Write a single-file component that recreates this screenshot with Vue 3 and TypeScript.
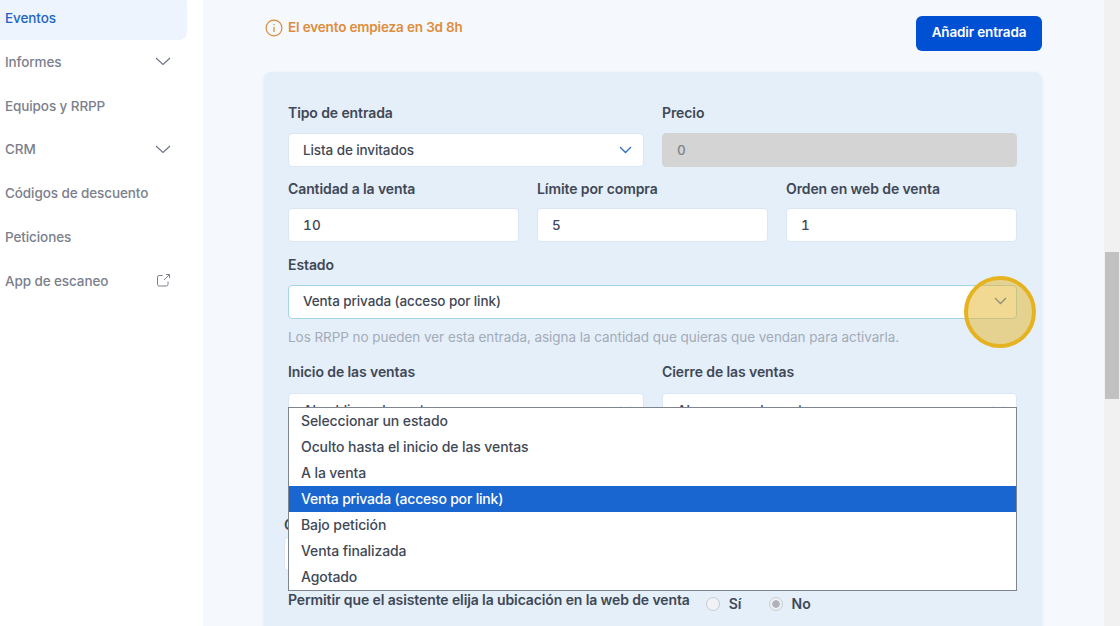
<script setup lang="ts">
const menu: { label: string; icon?: 'chevron' | 'external'; active?: boolean }[] = [
  { label: 'Eventos', active: true },
  { label: 'Informes', icon: 'chevron' },
  { label: 'Equipos y RRPP' },
  { label: 'CRM', icon: 'chevron' },
  { label: 'Códigos de descuento' },
  { label: 'Peticiones' },
  { label: 'App de escaneo', icon: 'external' },
]
const options = [
  'Seleccionar un estado',
  'Oculto hasta el inicio de las ventas',
  'A la venta',
  'Venta privada (acceso por link)',
  'Bajo petición',
  'Venta finalizada',
  'Agotado',
]
const selected = 'Venta privada (acceso por link)'
</script>

<template>
  <div class="page">
    <aside class="sidebar">
      <div v-for="item in menu" :key="item.label" class="item" :class="{ active: item.active }">
        <span>{{ item.label }}</span>
        <svg v-if="item.icon === 'chevron'" width="16" height="9" viewBox="0 0 16 9" fill="none">
          <path d="M1 1l7 6.5L15 1" stroke="#6b7280" stroke-width="1.1" />
        </svg>
        <svg v-if="item.icon === 'external'" width="15" height="15" viewBox="0 0 15 15" fill="none">
          <path d="M6.5 2.5H3.2A1.7 1.7 0 0 0 1.5 4.2v7.1A1.7 1.7 0 0 0 3.2 13h7.1a1.7 1.7 0 0 0 1.7-1.7V8.5M8 7l5.5-5.5M10 1.5h3.5V5" stroke="#7b808c" stroke-width="1" />
        </svg>
      </div>
    </aside>

    <main class="main">
      <div class="top">
        <div class="notice">
          <svg width="18" height="18" viewBox="0 0 18 18" fill="none">
            <circle cx="9" cy="9" r="7.9" stroke="#dd8a35" stroke-width="1.2" />
            <path d="M9 8v5M9 5v1.2" stroke="#dd8a35" stroke-width="1.2" />
          </svg>
          <span>El evento empieza en 3d 8h</span>
        </div>
        <button class="add">Añadir entrada</button>
      </div>

      <section class="card">
        <div class="grid two row1">
          <div>
            <div class="label">Tipo de entrada</div>
            <div class="field select">
              <span>Lista de invitados</span>
              <svg width="13" height="8" viewBox="0 0 13 8" fill="none"><path d="M1 1l5.5 5.5L12 1" stroke="#2f6fc0" stroke-width="1.3" /></svg>
            </div>
          </div>
          <div>
            <div class="label">Precio</div>
            <div class="field disabled num">0</div>
          </div>
        </div>

        <div class="grid three row2">
          <div>
            <div class="label">Cantidad a la venta</div>
            <div class="field num">10</div>
          </div>
          <div>
            <div class="label">Límite por compra</div>
            <div class="field num">5</div>
          </div>
          <div>
            <div class="label">Orden en web de venta</div>
            <div class="field num">1</div>
          </div>
        </div>

        <div class="row3">
          <div class="label">Estado</div>
          <div class="field select focus">
            <span>Venta privada (acceso por link)</span>
            <svg width="13" height="8" viewBox="0 0 13 8" fill="none"><path d="M1 1l5.5 5.5L12 1" stroke="#2f6fc0" stroke-width="1.3" /></svg>
          </div>
          <p class="help">Los RRPP no pueden ver esta entrada, asigna la cantidad que quieras que vendan para activarla.</p>
        </div>

        <div class="grid two row4">
          <div>
            <div class="label">Inicio de las ventas</div>
            <div class="field select"><span>Al publicar el evento</span><svg width="13" height="8" viewBox="0 0 13 8" fill="none"><path d="M1 1l5.5 5.5L12 1" stroke="#2f6fc0" stroke-width="1.3" /></svg></div>
          </div>
          <div>
            <div class="label">Cierre de las ventas</div>
            <div class="field select"><span>Al empezar el evento</span><svg width="13" height="8" viewBox="0 0 13 8" fill="none"><path d="M1 1l5.5 5.5L12 1" stroke="#2f6fc0" stroke-width="1.3" /></svg></div>
          </div>
        </div>

        <div class="row5">
          <div class="label">Comisión</div>
          <div class="field"></div>
        </div>

        <div class="row6">
          <span class="label inline">Permitir que el asistente elija la ubicación en la web de venta</span>
          <span class="radio-wrap"><span class="radio"></span><b>Sí</b></span>
          <span class="radio-wrap"><span class="radio on"></span><b>No</b></span>
        </div>

        <ul class="dropdown">
          <li v-for="o in options" :key="o" :class="{ sel: o === selected }">{{ o }}</li>
        </ul>
      </section>

      <div class="pointer"></div>
    </main>

    <div class="scrollbar"><div class="thumb"></div></div>
  </div>
</template>

<style>
html, body { margin: 0; overflow: hidden; }
</style>

<style scoped>
.page {
  display: flex;
  width: 1120px;
  height: 626px;
  overflow: hidden;
  font-family: Inter, "Liberation Sans", sans-serif;
  background: #f5f8fc;
  color: #374151;
}
.sidebar {
  width: 203px;
  flex: none;
  background: #fff;
  margin-top: -4px;
}
.item {
  width: 187px;
  box-sizing: border-box;
  height: 43.83px;
  padding: 0 16px 0 5px;
  display: flex;
  align-items: center;
  justify-content: space-between;
  font-size: 13.5px;
  font-weight: 500;
  letter-spacing: -0.1px;
  color: #7b808c;
}
.item.active {
  background: #eef4fd;
  color: #2065c4;
  border-radius: 0 8px 8px 0;
}
.main {
  position: relative;
  flex: 1;
  padding: 16px 62px 0 61px;
  min-width: 0;
}
.top {
  display: flex;
  justify-content: space-between;
  align-items: flex-start;
  height: 56px;
}
.notice {
  display: flex;
  align-items: center;
  gap: 5px;
  margin-left: 1px;
  margin-top: 1px;
  font-size: 13.5px;
  font-weight: 600;
  letter-spacing: -0.15px;
  color: #dd8d3c;
}
.notice svg { margin-top: 2px; }
.add {
  width: 126px;
  height: 35px;
  border: 0;
  border-radius: 6px;
  background: #0050d4;
  color: #fff;
  font: 600 13.5px Inter, "Liberation Sans", sans-serif;
  letter-spacing: -0.15px;
  padding: 0 0 3px;
}
.card {
  position: relative;
  width: 778px;
  box-sizing: border-box;
  height: 700px;
  padding: 32px 25px 0 24px;
  border-radius: 8px;
  background: #e5eff9;
  box-shadow: 0 1px 3px rgba(100, 130, 180, 0.16);
}
.grid { display: grid; }
.two { grid-template-columns: 356px 355px; column-gap: 18px; }
.three { grid-template-columns: 231px 231px 231px; column-gap: 18px; }
.label {
  font-size: 14px;
  font-weight: 600;
  letter-spacing: -0.1px;
  line-height: 18px;
  color: #3f4856;
  margin-bottom: 11px;
}
.label.inline { margin: 0; letter-spacing: -0.11px; }
.field {
  box-sizing: border-box;
  height: 34px;
  padding: 0 14px;
  display: flex;
  align-items: center;
  justify-content: space-between;
  border: 1px solid #dbe6f4;
  border-radius: 4px;
  background: #fff;
  font-size: 13.5px;
  font-weight: 500;
  letter-spacing: -0.1px;
  color: #3f4856;
}
.field.select svg { margin-right: -3px; }
.field.focus { padding-bottom: 2px; }
.field.focus svg { margin-right: -5px; }
.num { font-variant-numeric: tabular-nums; font-size: 13.5px; letter-spacing: 0.2px; }
.disabled { background: #d4d4d4; border-color: #d4d4d4; color: #7e848c; }
.focus { border-color: #a5d5e8; }
.row2 { margin-top: 13px; }
.row2 .label { margin-bottom: 10px; }
.row3 { margin-top: 14px; }
.help {
  margin: 9px 0 0;
  font-size: 13.5px;
  letter-spacing: -0.05px;
  line-height: 18px;
  color: #a3abb8;
}
.row4 { margin-top: 17px; }
.row4 .label { margin-bottom: 12px; }
.row5 { margin-top: 89px; margin-left: -4px; width: 360px; }
.row5 .label { margin-bottom: 3px; height: 18px; }
.row6 {
  margin-top: 20px;
  display: flex;
  align-items: flex-start;
  white-space: nowrap;
}
.radio-wrap {
  display: inline-flex;
  align-items: center;
  gap: 9px;
  margin-top: 4px;
  margin-left: 16px;
  font-size: 14px;
  line-height: 18px;
  color: #3f4856;
}
.radio-wrap + .radio-wrap { margin-left: 27px; }
.radio-wrap b { font-weight: 600; }
.radio {
  box-sizing: border-box;
  width: 14px;
  height: 14px;
  border: 1px solid #c8ccd2;
  border-radius: 50%;
  background: #f0f2f5;
}
.radio.on {
  background: radial-gradient(circle, #b0b4ba 0 3.5px, #eef0f3 4px);
}
.dropdown {
  position: absolute;
  left: 24px;
  top: 335px;
  width: 729px;
  box-sizing: border-box;
  margin: 0;
  padding: 0;
  list-style: none;
  background: #fff;
  border: 1px solid #7f858c;
}
.dropdown li {
  height: 26px;
  line-height: 25px;
  padding-left: 12px;
  font-size: 14px;
  font-weight: 500;
  letter-spacing: -0.1px;
  color: #3f4856;
}
.dropdown li.sel { background: #1a66d0; color: #fff; letter-spacing: -0.2px; }
.pointer {
  position: absolute;
  left: 761px;
  top: 276px;
  width: 72px;
  height: 72px;
  box-sizing: border-box;
  border: 4px solid #e6b320;
  border-radius: 50%;
  background: rgba(230, 180, 40, 0.5);
}
.scrollbar {
  width: 16px;
  flex: none;
  background: #f1f1f1;
  padding: 252px 1px 0;
  box-sizing: border-box;
}
.thumb { height: 147px; background: #c1c1c1; }
</style>
